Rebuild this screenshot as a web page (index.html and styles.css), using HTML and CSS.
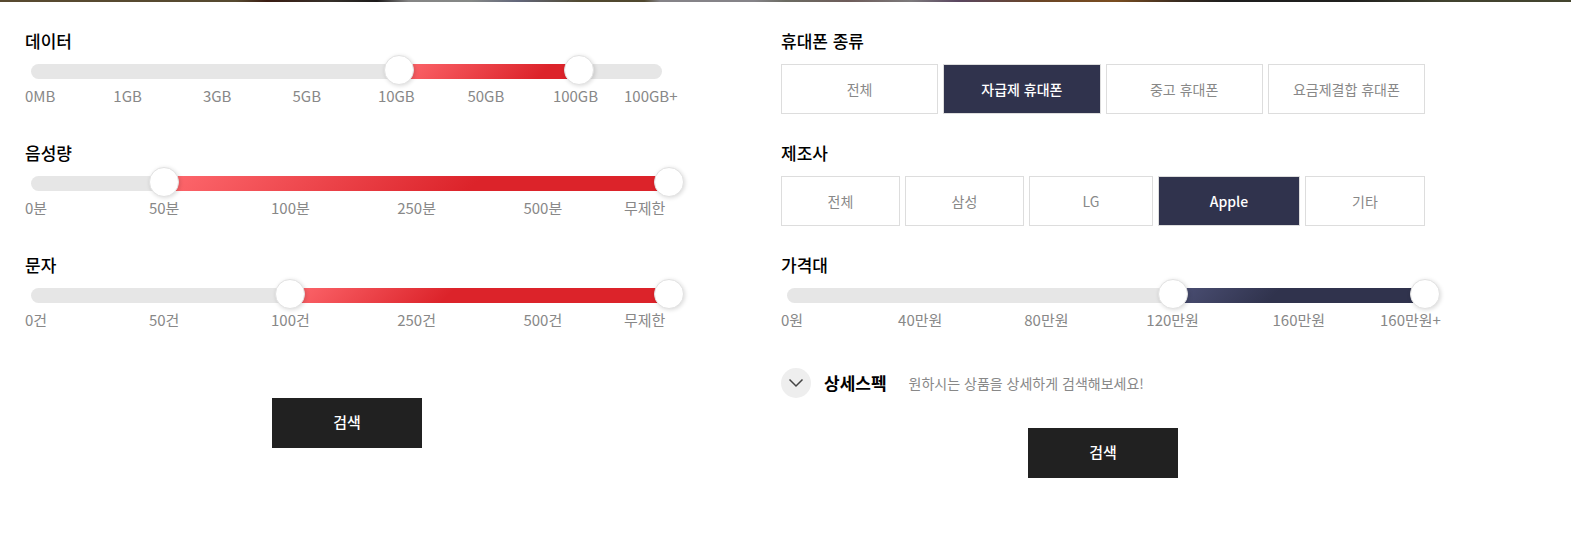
FILE: index.html
```
<!DOCTYPE html>
<html lang="ko">
<head>
<meta charset="UTF-8">
<meta name="viewport" content="width=device-width, initial-scale=1.0">
<title>요금제 · 휴대폰 검색</title>
<link rel="stylesheet" href="styles.css">
</head>
<body>

<div class="visual"></div>

<main class="container">
    <!-- 요금제 -->
    <form class="panel plan">
        <section class="field">
            <h2 class="field-title">데이터</h2>
            <div class="slider">
                <div class="rail"><div class="fill short" style="left:57.14%; width:28.57%"></div></div>
                <input type="range" min="0" max="7" value="4" aria-label="데이터 최소">
                <input type="range" min="0" max="7" value="6" aria-label="데이터 최대">
            </div>
            <ul class="ticks many">
                <li><span>0MB</span></li>
                <li><span>1GB</span></li>
                <li><span>3GB</span></li>
                <li><span>5GB</span></li>
                <li><span>10GB</span></li>
                <li><span>50GB</span></li>
                <li><span>100GB</span></li>
                <li><span>100GB+</span></li>
            </ul>
        </section>
        <section class="field">
            <h2 class="field-title">음성량</h2>
            <div class="slider">
                <div class="rail"><div class="fill long" style="left:20%; width:80%"></div></div>
                <input type="range" min="0" max="5" value="1" aria-label="음성량 최소">
                <input type="range" min="0" max="5" value="5" aria-label="음성량 최대">
            </div>
            <ul class="ticks">
                <li><span>0분</span></li>
                <li><span>50분</span></li>
                <li><span>100분</span></li>
                <li><span>250분</span></li>
                <li><span>500분</span></li>
                <li><span>무제한</span></li>
            </ul>
        </section>
        <section class="field">
            <h2 class="field-title">문자</h2>
            <div class="slider">
                <div class="rail"><div class="fill" style="left:40%; width:60%"></div></div>
                <input type="range" min="0" max="5" value="2" aria-label="문자 최소">
                <input type="range" min="0" max="5" value="5" aria-label="문자 최대">
            </div>
            <ul class="ticks">
                <li><span>0건</span></li>
                <li><span>50건</span></li>
                <li><span>100건</span></li>
                <li><span>250건</span></li>
                <li><span>500건</span></li>
                <li><span>무제한</span></li>
            </ul>
        </section>
        <button type="button" class="btn-search">검색</button>
    </form>

    <!-- 휴대폰 -->
    <form class="panel phone">
        <section class="field">
            <h2 class="field-title">휴대폰 종류</h2>
            <div class="choices kind">
                <label class="choice"><input type="radio" name="kind"><span>전체</span></label>
                <label class="choice"><input type="radio" name="kind" checked><span>자급제 휴대폰</span></label>
                <label class="choice"><input type="radio" name="kind"><span>중고 휴대폰</span></label>
                <label class="choice"><input type="radio" name="kind"><span>요금제결합 휴대폰</span></label>
            </div>
        </section>
        <section class="field">
            <h2 class="field-title">제조사</h2>
            <div class="choices maker">
                <label class="choice"><input type="radio" name="maker"><span>전체</span></label>
                <label class="choice"><input type="radio" name="maker"><span>삼성</span></label>
                <label class="choice"><input type="radio" name="maker"><span>LG</span></label>
                <label class="choice"><input type="radio" name="maker" checked><span>Apple</span></label>
                <label class="choice"><input type="radio" name="maker"><span>기타</span></label>
            </div>
        </section>
        <section class="field">
            <h2 class="field-title">가격대</h2>
            <div class="slider">
                <div class="rail"><div class="fill navy" style="left:60%; width:40%"></div></div>
                <input type="range" min="0" max="5" value="3" aria-label="가격대 최소">
                <input type="range" min="0" max="5" value="5" aria-label="가격대 최대">
            </div>
            <ul class="ticks">
                <li><span>0원</span></li>
                <li><span>40만원</span></li>
                <li><span>80만원</span></li>
                <li><span>120만원</span></li>
                <li><span>160만원</span></li>
                <li><span>160만원+</span></li>
            </ul>
        </section>
        <div class="detail">
            <button type="button" class="btn-more" aria-label="상세스펙 열기">
                <svg width="30" height="30" viewBox="0 0 30 30" fill="none" stroke="#444" stroke-width="1.5"><path d="M8.5 11.5 L15 18 L21.5 11.5"/></svg>
            </button>
            <strong class="detail-title">상세스펙</strong>
            <span class="detail-text">원하시는 상품을 상세하게 검색해보세요!</span>
        </div>
        <button type="button" class="btn-search">검색</button>
    </form>
</main>

</body>
</html>
```

FILE: styles.css
```
* {
    box-sizing: border-box;
}
body {
    margin: 0;
    background-color: #fff;
    color: #000;
    font-family: "Noto Sans CJK KR", sans-serif;
    font-size: 14px;
}
button {
    border: 0;
    padding: 0;
    font-family: inherit;
    cursor: pointer;
}
.visual {
    height: 2px;
    background: linear-gradient(90deg, #584a30 0%, #564a30 15%, #3a1c12 17%, #35302a 21%, #1c1a1a 24%, #858585 26%, #858886 30%, #62667a 33%, #51492f 37%, #50482f 41%, #858388 42%, #858388 48%, #6b6b62 50%, #6e5c5a 54%, #7c7a7c 58%, #5a4660 61%, #6a4526 66%, #7a4d20 71%, #3a2c20 75%, #1e1e1e 78%, #20201e 86%, #41422f 92%, #44452f 100%);
}
.container {
    display: grid;
    grid-template-columns: 1fr 1fr;
    column-gap: 112px;
    padding: 24px 146px 60px 25px;
}
.field {
    min-height: 112px;
}
.field-title {
    margin: 0 0 8px;
    font-size: 17px;
    font-weight: 500;
    line-height: 30px;
}

/* range slider */
.slider {
    position: relative;
    height: 15px;
    padding: 0 7px 0 6px;
}
.rail {
    height: 15px;
    border-radius: 8px;
    background-color: #e6e6e6;
}
.fill {
    position: absolute;
    top: 0;
    height: 15px;
    background: linear-gradient(135deg, #ff6b70 0%, #dc232a 43%);
}
.fill.short {
    background: linear-gradient(135deg, #ff6b70 0%, #dc232a 80%);
}
.fill.long {
    background: linear-gradient(135deg, #ff6b70 0%, #dc232a 62%);
}
.fill.navy {
    background: linear-gradient(135deg, #4e5278 0%, #30334d 42%);
}
.slider input {
    position: absolute;
    top: -9px;
    left: -2px;
    width: calc(100% + 17px);
    height: 30px;
    margin: 0;
    background: none;
    pointer-events: none;
    -webkit-appearance: none;
    appearance: none;
}
.slider input::-webkit-slider-thumb {
    width: 30px;
    height: 30px;
    border: 1px solid #e2e2e2;
    border-radius: 50%;
    background-color: #fff;
    box-shadow: 1px 1px 4px rgba(0, 0, 0, 0.15);
    cursor: pointer;
    pointer-events: auto;
    -webkit-appearance: none;
}

/* labels under the slider */
.ticks {
    display: flex;
    margin: 6px 0 0;
    padding: 0 0 0 13px;
    list-style: none;
    color: #888;
    font-size: 15px;
    line-height: 22px;
    white-space: nowrap;
}
.ticks li {
    display: flex;
    flex: 2 1 0;
    justify-content: center;
    min-width: 0;
}
.ticks li:first-child {
    flex-grow: 1;
    justify-content: flex-start;
}
.ticks li:first-child span {
    margin-left: -13px;
}
.ticks li:last-child {
    flex-grow: 1;
    justify-content: flex-end;
}
.ticks li:last-child span {
    width: 45px;
}
.ticks.many {
    padding-right: 4px;
}
.ticks.many li:last-child span {
    width: 41px;
}

/* option buttons */
.choices {
    display: grid;
    gap: 5px;
}
.kind {
    grid-template-columns: repeat(4, 1fr);
}
.maker {
    grid-template-columns: 119fr 119fr 124fr 142fr 120fr;
}
.choice {
    position: relative;
}
.choice input {
    position: absolute;
    opacity: 0;
}
.choice span {
    display: block;
    border: 1px solid #ddd;
    color: #888;
    line-height: 48px;
    text-align: center;
    cursor: pointer;
}
.choice input:checked + span {
    background-color: #30334d;
    color: #fff;
    font-weight: 500;
}

.detail {
    display: flex;
    align-items: center;
    height: 30px;
    margin-top: 6px;
}
.btn-more {
    width: 30px;
    height: 30px;
    border-radius: 50%;
    background-color: #eee;
}
.btn-more svg {
    display: block;
}
.detail-title {
    margin: 0 22px 0 13px;
    font-size: 17px;
    line-height: 28px;
}
.detail-text {
    color: #888;
}
.btn-search {
    display: block;
    width: 150px;
    height: 50px;
    margin: 30px auto 0;
    padding-bottom: 3px;
    background-color: #212121;
    color: #fff;
    font-size: 15px;
    font-weight: 500;
}
.plan .btn-search {
    margin-top: 36px;
}
```
